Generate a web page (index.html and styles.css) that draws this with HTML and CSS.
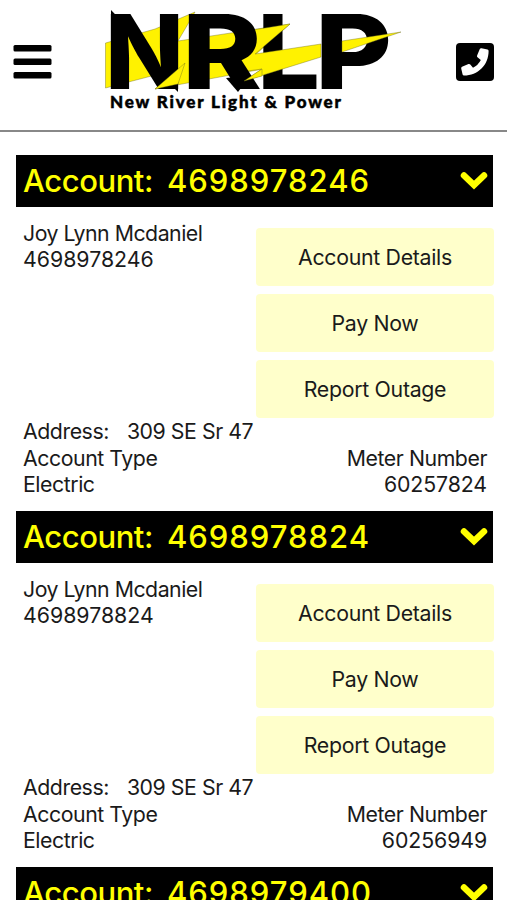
FILE: index.html
```html
<!DOCTYPE html>
<html lang="en">
<head>
    <meta charset="UTF-8">
    <meta name="viewport" content="width=device-width, initial-scale=1.0">
    <title>New River Light &amp; Power</title>
    <link rel="stylesheet" href="styles.css">
</head>
<body>
    <header class="header">
        <button class="icon-btn" aria-label="Menu">
            <svg width="40" height="38" viewBox="0 0 40 38">
                <rect x="0.5" y="2" width="38" height="6.5" rx="1.5"/>
                <rect x="0.5" y="15.5" width="38" height="6.5" rx="1.5"/>
                <rect x="0.5" y="29" width="38" height="6.5" rx="1.5"/>
            </svg>
        </button>
        <svg class="logo" width="310" height="120" viewBox="100 0 310 120">
            <!-- bolt behind the letters -->
            <path class="bolt" d="M105.5 43L155 29L195 12L178 41L290 24L255 55L263 69L155 89L176 70L163 73L105.5 88Z"/>
            <text class="letter" x="105" y="89" textLength="79" lengthAdjust="spacingAndGlyphs">N</text>
            <path d="M111 10L136 36H111ZM156 70L178 92V70Z"/>
            <text class="letter" x="257" y="89" textLength="63" lengthAdjust="spacingAndGlyphs">L</text>
            <text class="letter" x="315" y="89" textLength="77" lengthAdjust="spacingAndGlyphs">P</text>
            <!-- bolt in front of the letters -->
            <path class="bolt" d="M240 32L290 24L255 54L321 44V57L244 81L262 69L240 72Z"/>
            <path class="bolt" d="M342 41L401 32L342 52Z"/>
            <text class="letter" x="182" y="89" textLength="80" lengthAdjust="spacingAndGlyphs">R</text>
            <path d="M226 78L250 76L238 92Z"/>
            <path class="bolt" d="M155 89L185 63L178 84Z"/>
            <path class="bolt" d="M262 69L244 81L262 76Z"/>
            <text class="tagline" x="110" y="108" textLength="231">New River Light &amp; Power</text>
        </svg>
        <button class="icon-btn" aria-label="Call">
            <svg width="38" height="38" viewBox="0 0 38 38">
                <rect width="38" height="38" rx="4"/>
                <path fill="#fff" d="M25.5 5.2L31.5 6.6Q32.6 6.9 32.6 8C32.6 22 22 32.6 8 32.6Q6.9 32.6 6.6 31.5L5.2 25.5Q5 24.3 6 23.8L12.5 21.1Q13.5 20.7 14.3 21.5L17 24.8Q22.2 22.2 24.8 17L21.5 14.3Q20.7 13.5 21.1 12.5L23.8 6Q24.3 5 25.5 5.2Z"/>
            </svg>
        </button>
    </header>

    <main class="accounts">
        <section class="account">
            <h2 class="account-bar">
                <span>Account:</span><span class="number">4698978246</span>
                <svg class="chevron" width="28" height="20" viewBox="0 0 28 20"><path d="M4 4.5L14 14L24 4.5"/></svg>
            </h2>
            <div class="account-top">
                <div class="owner">
                    <div class="name">Joy Lynn Mcdaniel</div>
                    <div>4698978246</div>
                </div>
                <div class="actions">
                    <button>Account Details</button>
                    <button>Pay Now</button>
                    <button>Report Outage</button>
                </div>
            </div>
            <div class="address"><span>Address:</span><span>309 SE Sr 47</span></div>
            <div class="row"><span>Account Type</span><span>Meter Number</span></div>
            <div class="row"><span>Electric</span><span class="meter">60257824</span></div>
        </section>

        <section class="account">
            <h2 class="account-bar">
                <span>Account:</span><span class="number">4698978824</span>
                <svg class="chevron" width="28" height="20" viewBox="0 0 28 20"><path d="M4 4.5L14 14L24 4.5"/></svg>
            </h2>
            <div class="account-top">
                <div class="owner">
                    <div class="name">Joy Lynn Mcdaniel</div>
                    <div>4698978824</div>
                </div>
                <div class="actions">
                    <button>Account Details</button>
                    <button>Pay Now</button>
                    <button>Report Outage</button>
                </div>
            </div>
            <div class="address"><span>Address:</span><span>309 SE Sr 47</span></div>
            <div class="row"><span>Account Type</span><span>Meter Number</span></div>
            <div class="row"><span>Electric</span><span class="meter">60256949</span></div>
        </section>

        <section class="account">
            <h2 class="account-bar">
                <span>Account:</span><span class="number">4698979400</span>
                <svg class="chevron" width="28" height="20" viewBox="0 0 28 20"><path d="M4 4.5L14 14L24 4.5"/></svg>
            </h2>
        </section>
    </main>
</body>
</html>
```
FILE: styles.css
```css
* {
    box-sizing: border-box;
}

body {
    margin: 0;
    height: 900px;
    overflow: hidden;
    background: #fff;
    color: #1a1a1a;
    font-family: Inter, "Liberation Sans", sans-serif;
    font-size: 21.3px;
    line-height: 26px;
    letter-spacing: -0.45px;
}

.header {
    display: flex;
    justify-content: space-between;
    height: 132px;
    padding: 0 13px;
    border-bottom: 2px solid #888;
}

.icon-btn {
    display: flex;
    margin-top: 43px;
    height: 38px;
    padding: 0;
    border: none;
    background: none;
}

.logo {
    overflow: visible;
    letter-spacing: 0;
}

.letter {
    font-family: Inter, sans-serif;
    font-size: 103px;
    font-weight: 850;
}

.bolt {
    fill: #fff200;
    stroke: #6b6a20;
    stroke-width: 0.4;
}

.tagline {
    font-family: Lato, sans-serif;
    font-size: 17px;
    font-weight: 900;
    stroke: #000;
    stroke-width: 0.5;
}

.accounts {
    padding: 23px 13px 0 16px;
}

.account {
    height: 356px;
}

.account-bar {
    display: flex;
    align-items: center;
    height: 52px;
    margin: 0 1px 21px 0;
    padding: 0 5px 0 7px;
    background: #000;
    color: #ff0;
    font-size: 31px;
    font-weight: 550;
}

.number {
    margin-left: 14px;
    letter-spacing: 1px;
}

.chevron {
    margin-left: auto;
    fill: none;
    stroke: #ff0;
    stroke-width: 6.5;
    stroke-linecap: round;
}

.account-top {
    display: flex;
    justify-content: space-between;
}

.owner {
    padding-left: 7px;
    margin-top: -8px;
    letter-spacing: 0;
}

.name {
    letter-spacing: -0.5px;
}

.actions {
    display: flex;
    flex-direction: column;
    gap: 8px;
    width: 238px;
}

.actions button {
    height: 58px;
    padding: 0 0 1px;
    border: none;
    border-radius: 4px;
    background: #ffffcb;
    color: #1a1a1a;
    font: inherit;
    letter-spacing: -0.3px;
}

.address {
    display: flex;
    gap: 18px;
    padding: 0 7px 1px;
}

.row {
    display: flex;
    justify-content: space-between;
    padding: 0 7px;
}

.meter {
    letter-spacing: -0.1px;
}
```
